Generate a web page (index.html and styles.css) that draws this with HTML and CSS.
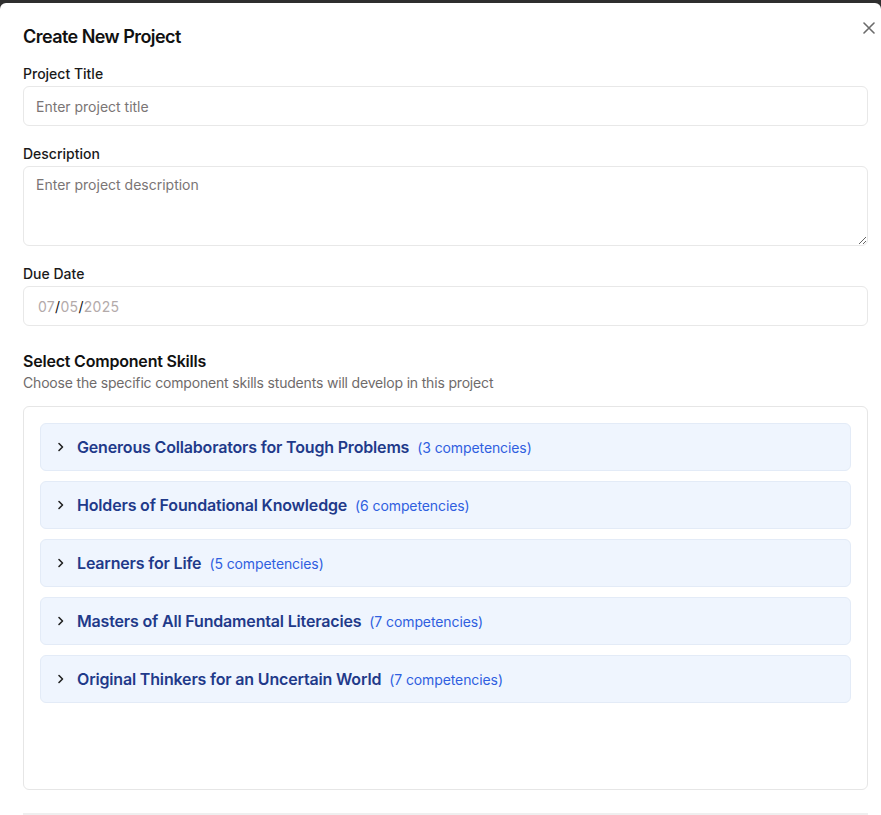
FILE: index.html
```html
<!DOCTYPE html>
<html lang="en">
<head>
<meta charset="utf-8">
<title>Create New Project</title>
<link rel="stylesheet" href="styles.css">
</head>
<body>
<div class="modal">
  <button class="close" aria-label="Close">
    <svg width="12" height="12" viewBox="0 0 12 12"><path d="M1 1L11 11M11 1L1 11" stroke="#6b6b6b" stroke-width="1.6" stroke-linecap="round"/></svg>
  </button>
  <h2 class="title">Create New Project</h2>

  <div class="field">
    <label class="label">Project Title</label>
    <input class="input" type="text" placeholder="Enter project title">
  </div>

  <div class="field">
    <label class="label">Description</label>
    <textarea class="input textarea" placeholder="Enter project description"></textarea>
  </div>

  <div class="field">
    <label class="label">Due Date</label>
    <div class="input date"><span class="dp">07</span><span class="ds">/</span><span class="dp">05</span><span class="ds">/</span><span class="dp">2025</span></div>
  </div>

  <div class="skills">
    <h3 class="skills-title">Select Component Skills</h3>
    <p class="skills-sub">Choose the specific component skills students will develop in this project</p>
    <div class="skills-box">
      <div class="item"><svg class="chev" width="16" height="16" viewBox="0 0 16 16"><path d="M6 4.5L9.5 8L6 11.5" fill="none" stroke="#222" stroke-width="1.6" stroke-linecap="round" stroke-linejoin="round"/></svg><span class="item-name">Generous Collaborators for Tough Problems</span><span class="item-count">(3 competencies)</span></div>
      <div class="item"><svg class="chev" width="16" height="16" viewBox="0 0 16 16"><path d="M6 4.5L9.5 8L6 11.5" fill="none" stroke="#222" stroke-width="1.6" stroke-linecap="round" stroke-linejoin="round"/></svg><span class="item-name">Holders of Foundational Knowledge</span><span class="item-count">(6 competencies)</span></div>
      <div class="item"><svg class="chev" width="16" height="16" viewBox="0 0 16 16"><path d="M6 4.5L9.5 8L6 11.5" fill="none" stroke="#222" stroke-width="1.6" stroke-linecap="round" stroke-linejoin="round"/></svg><span class="item-name">Learners for Life</span><span class="item-count">(5 competencies)</span></div>
      <div class="item"><svg class="chev" width="16" height="16" viewBox="0 0 16 16"><path d="M6 4.5L9.5 8L6 11.5" fill="none" stroke="#222" stroke-width="1.6" stroke-linecap="round" stroke-linejoin="round"/></svg><span class="item-name">Masters of All Fundamental Literacies</span><span class="item-count">(7 competencies)</span></div>
      <div class="item"><svg class="chev" width="16" height="16" viewBox="0 0 16 16"><path d="M6 4.5L9.5 8L6 11.5" fill="none" stroke="#222" stroke-width="1.6" stroke-linecap="round" stroke-linejoin="round"/></svg><span class="item-name">Original Thinkers for an Uncertain World</span><span class="item-count">(7 competencies)</span></div>
    </div>
  </div>

  <div class="footer"></div>
</div>
</body>
</html>
```

FILE: styles.css
```css
* { box-sizing: border-box; }
html, body { margin: 0; padding: 0; }
body {
  background: #2f2f2f;
  font-family: Inter, "Noto Sans", sans-serif;
  color: #111;
  padding-top: 3px;
  overflow: hidden;
}
.modal {
  position: relative;
  background: #fff;
  border-radius: 6px 6px 0 0;
  padding: 20px 13px 0 23px;
  min-height: 812px;
}
.close {
  position: absolute;
  top: 19px;
  right: 6px;
  width: 12px;
  height: 12px;
  padding: 0;
  border: 0;
  background: transparent;
  display: flex;
}
.title {
  margin: 0 0 13px;
  font-size: 18px;
  line-height: 28px;
  font-weight: 600;
  color: #111;
  letter-spacing: -0.55px;
}
.field { display: flex; flex-direction: column; margin-bottom: 18px; }
.label {
  font-size: 14px;
  line-height: 20px;
  font-weight: 500;
  color: #1a1a1a;
  margin-bottom: 2px;
}
.input {
  width: 100%;
  height: 40px;
  border: 1px solid #e8e8e8;
  border-radius: 6px;
  padding: 0 12px;
  font-family: inherit;
  font-size: 14px;
  color: #111;
  background: #fff;
  outline: none;
}
.input::placeholder { color: #7a7575; }
.textarea {
  height: 80px;
  padding: 8px 12px;
  resize: vertical;
  line-height: 20px;
  display: block;
}
.date {
  display: flex;
  align-items: center;
  padding-left: 14px;
  letter-spacing: 0.3px;
  color: #111;
}
.dp { color: #b3aaaa; }
.ds { color: #111; }
.skills { margin-top: 23px; }
.skills-title {
  margin: 0;
  font-size: 16px;
  line-height: 24px;
  font-weight: 600;
  color: #111;
  letter-spacing: -0.2px;
}
.skills-sub {
  margin: 0 0 13px;
  font-size: 14px;
  line-height: 20px;
  color: #6f6b6b;
  letter-spacing: -0.18px;
}
.skills-box {
  height: 384px;
  border: 1px solid #e6e6e6;
  border-radius: 6px;
  padding: 16px;
  display: flex;
  flex-direction: column;
  gap: 10px;
}
.item {
  height: 48px;
  flex: none;
  background: #eff5fe;
  border: 1px solid #e3ebf7;
  border-radius: 6px;
  display: flex;
  align-items: center;
  padding: 0 12px;
}
.chev { flex: none; margin-right: 8px; }
.item-name {
  font-size: 16px;
  font-weight: 600;
  color: #1f3a8a;
  margin-right: 8px;
  letter-spacing: -0.17px;
}
.item-count {
  font-size: 14px;
  color: #2f5fe0;
  letter-spacing: -0.1px;
}
.footer {
  margin-top: 23px;
  border-top: 2px solid #efefef;
  height: 20px;
}
```
